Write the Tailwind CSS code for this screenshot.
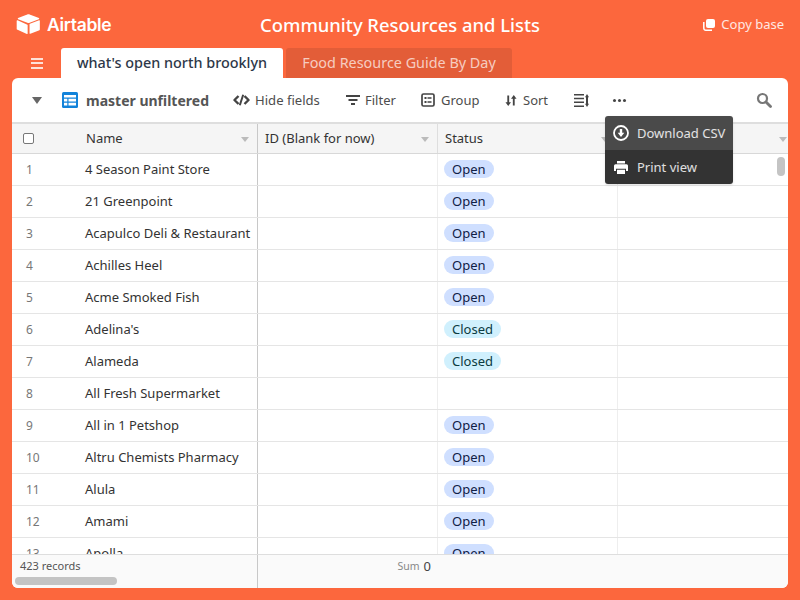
<!DOCTYPE html>
<html lang="en">
  <head>
    <meta charset="UTF-8" />
    <title>Community Resources and Lists</title>
    <script src="https://cdn.jsdelivr.net/npm/@tailwindcss/browser@4"></script>
  </head>
  <body class="w-[800px] h-[600px] overflow-hidden bg-[#fc673d] font-['Noto_Sans','Open_Sans',sans-serif] text-[13px] text-[#333333]">
    <!-- top bar -->
    <header class="h-[48px] relative flex items-center justify-between pl-[16px] pr-[16px] text-white">
      <div class="flex items-center gap-[6px]">
        <svg class="w-[25px] h-[20px]" viewBox="0 0 25 21" fill="#fff">
          <path d="M11.2.5 1.6 4.300c-.5.2-.5.9 0 1.100l9.700 3.800c.8.3 1.600.3 2.400 0l9.700-3.800c.5-.2.5-.9 0-1.100L13.700.5c-.8-.3-1.700-.3-2.500 0z" />
          <path d="M13.600 10.900v9.300c0 .4.4.7.8.5l9.600-3.700c.3-.1.4-.3.4-.6V7.100c0-.4-.4-.7-.8-.5l-9.600 3.700c-.3.1-.4.3-.4.6z" />
          <path d="M11.400 11.400 1 6.600c-.4-.2-.9.1-.9.5v8.600c0 .2.1.4.3.5l10.400 4.800c.4.2.8-.1.8-.5v-8.600c0-.2-.1-.4-.2-.5z" />
        </svg>
        <span class="font-['Inter',sans-serif] text-[17.500px] font-semibold tracking-[-0.3px] pt-[2px]">Airtable</span>
      </div>
      <h1 class="absolute left-0 right-0 text-center text-[18.4px] font-medium leading-[48px] pt-[2px]">Community Resources and Lists</h1>
      <div class="flex items-center gap-[6px] text-[13px] text-white/85 pt-[1px]">
        <svg class="w-[12px] h-[12px]" viewBox="0 0 12 12">
          <rect x="3" y="0" width="9" height="9" rx="2" fill="#fff" />
          <path d="M.8 3v6.200a2 2 0 0 0 2 2H9" fill="none" stroke="#fff" stroke-width="1.500" />
        </svg>
        <span>Copy base</span>
      </div>
    </header>

    <!-- tabs -->
    <nav class="h-[30px] flex items-end">
      <div class="w-[61px] h-full flex items-center justify-center pl-[13px]">
        <div class="w-[12px] flex flex-col gap-[2.500px]">
          <div class="h-[2px] bg-white/80"></div>
          <div class="h-[2px] bg-white/80"></div>
          <div class="h-[2px] bg-white/80"></div>
        </div>
      </div>
      <div class="h-full w-[222px] bg-white rounded-t-[3px] flex items-center justify-center pb-[1px] text-[14.400px] font-medium text-[#2d3748]">what's open north brooklyn</div>
      <div class="h-full w-[226px] ml-[3px] bg-[#e35d38] rounded-t-[3px] flex items-center justify-center pb-[1px] text-[14.400px] text-white/70">Food Resource Guide By Day</div>
    </nav>

    <!-- card -->
    <main class="relative mx-[12px] h-[510px] bg-white rounded-[6px] overflow-hidden flex flex-col">
      <!-- toolbar -->
      <div class="h-[44px] flex items-center shrink-0 text-[#4d4d4d]">
        <div class="ml-[20px] w-0 h-0 border-x-[5px] border-x-transparent border-t-[7px] border-t-[#666666]"></div>
        <svg class="ml-[20px] w-[16px] h-[16px]" viewBox="0 0 16 16">
          <rect width="16" height="16" rx="1.500" fill="#1283da" />
          <path d="M2 3h12v2.500H2zM2 6.800h3.300v2.700H2zM6.500 6.800H14v2.700H6.500zM2 10.800h3.300v2.700H2zM6.500 10.800H14v2.700H6.500z" fill="#fff" />
        </svg>
        <span class="ml-[8px] text-[14px] font-bold text-[#555555] w-[147px]">master unfiltered</span>
        <svg class="w-[17px] h-[12px]" viewBox="0 0 17 12" fill="none" stroke="#444444" stroke-width="2.400" stroke-linejoin="round">
          <path d="M5.500 2 1.500 6l4 4M11.500 2l4 4-4 4" />
          <path d="M10.200 .8 6.800 11.200" stroke-width="2" />
        </svg>
        <span class="ml-[5px] w-[91px] pt-[1px] text-[13.100px]">Hide fields</span>
        <svg class="w-[14px] h-[12px]" viewBox="0 0 14 12" fill="#444444"><path d="M0 1h14v2H0zM2.500 5h9v2h-9zM5 9h4v2H5z" /></svg>
        <span class="ml-[5px] w-[56px] pt-[1px]">Filter</span>
        <svg class="w-[14px] h-[14px]" viewBox="0 0 14 14" fill="none">
          <rect x="1" y="1" width="12" height="12" rx="1.500" stroke="#444444" stroke-width="1.700" />
          <path d="M3.500 4h2v2h-2zM3.500 8h2v2h-2zM6.500 4.300h4v1.400h-4zM6.500 8.300h4v1.400h-4z" fill="#444444" />
        </svg>
        <span class="ml-[6px] w-[64px] pt-[1px]">Group</span>
        <svg class="w-[12px] h-[13px]" viewBox="0 0 13 13" fill="#444444">
          <path d="M2.500 1h2v7.500H6.500L3.500 12.500.5 8.500h2zM8.500 12h2V4.500h2L9.500.5l-3 4h2z" />
        </svg>
        <span class="ml-[6px] w-[51px] pt-[1px]">Sort</span>
        <svg class="w-[15px] h-[13px]" viewBox="0 0 15 13" fill="#444444">
          <path d="M0 0h10v1.500H0zM0 3.800h10v1.500H0zM0 7.600h10v1.500H0zM0 11.500h10V13H0z" />
          <path d="M12 3h2v7h-2z" /><path d="M13 0l2 3.300h-4zM13 13l2-3.300h-4z" />
        </svg>
        <div class="ml-[24px] flex gap-[2px]">
          <div class="w-[3px] h-[3px] rounded-full bg-[#444444]"></div>
          <div class="w-[3px] h-[3px] rounded-full bg-[#444444]"></div>
          <div class="w-[3px] h-[3px] rounded-full bg-[#444444]"></div>
        </div>
        <svg class="ml-auto mr-[16px] w-[16px] h-[16px]" viewBox="0 0 16 16" fill="none" stroke="#777777">
          <circle cx="6.500" cy="6.500" r="4.500" stroke-width="2.200" />
          <path d="M10 10l4.500 4.500" stroke-width="2.800" stroke-linecap="round" />
        </svg>
      </div>

      <!-- column headers -->
      <div class="h-[32px] shrink-0 flex bg-[#f5f5f5] border-t-[2px] border-[#dedede] border-b border-b-[#d8d8d8]">
        <div class="w-[246px] flex items-center border-r border-[#c8c8c8] relative">
          <div class="ml-[11px] w-[11px] h-[11px] rounded-[2px] border border-[#777777] bg-white"></div>
          <span class="ml-[52px]">Name</span>
          <div class="absolute right-[8px] top-[13px] w-0 h-0 border-x-[4px] border-x-transparent border-t-[5px] border-t-[#bbbbbb]"></div>
        </div>
        <div class="w-[180px] flex items-center pl-[7px] border-r border-[#dedede] relative">
          ID (Blank for now)
          <div class="absolute right-[8px] top-[13px] w-0 h-0 border-x-[4px] border-x-transparent border-t-[5px] border-t-[#bbbbbb]"></div>
        </div>
        <div class="w-[180px] flex items-center pl-[7px] border-r border-[#dedede] relative">
          Status
          <div class="absolute right-[8px] top-[13px] w-0 h-0 border-x-[4px] border-x-transparent border-t-[5px] border-t-[#bbbbbb]"></div>
        </div>
        <div class="flex-1 relative">
          <div class="absolute right-[1px] top-[13px] w-0 h-0 border-x-[4px] border-x-transparent border-t-[5px] border-t-[#bbbbbb]"></div>
        </div>
      </div>

      <!-- rows -->
      <div class="flex-1 overflow-hidden text-[13px] text-[#333333]">
        <div class="flex h-[32px] border-b border-[#e5e5e5]"><div class="w-[246px] flex items-center border-r border-[#c8c8c8]"><span class="w-[73px] pl-[14px] text-[12px] text-[#777777]">1</span>4 Season Paint Store</div><div class="w-[180px] border-r border-[#eeeeee]"></div><div class="w-[180px] flex items-center pl-[6px] border-r border-[#eeeeee]"><span class="h-[18px] mb-[2px] leading-[18px] px-[8px] rounded-full bg-[#cfdfff] text-[#102046]">Open</span></div></div>
        <div class="flex h-[32px] border-b border-[#e5e5e5]"><div class="w-[246px] flex items-center border-r border-[#c8c8c8]"><span class="w-[73px] pl-[14px] text-[12px] text-[#777777]">2</span>21 Greenpoint</div><div class="w-[180px] border-r border-[#eeeeee]"></div><div class="w-[180px] flex items-center pl-[6px] border-r border-[#eeeeee]"><span class="h-[18px] mb-[2px] leading-[18px] px-[8px] rounded-full bg-[#cfdfff] text-[#102046]">Open</span></div></div>
        <div class="flex h-[32px] border-b border-[#e5e5e5]"><div class="w-[246px] flex items-center border-r border-[#c8c8c8]"><span class="w-[73px] pl-[14px] text-[12px] text-[#777777]">3</span>Acapulco Deli &amp; Restaurant</div><div class="w-[180px] border-r border-[#eeeeee]"></div><div class="w-[180px] flex items-center pl-[6px] border-r border-[#eeeeee]"><span class="h-[18px] mb-[2px] leading-[18px] px-[8px] rounded-full bg-[#cfdfff] text-[#102046]">Open</span></div></div>
        <div class="flex h-[32px] border-b border-[#e5e5e5]"><div class="w-[246px] flex items-center border-r border-[#c8c8c8]"><span class="w-[73px] pl-[14px] text-[12px] text-[#777777]">4</span>Achilles Heel</div><div class="w-[180px] border-r border-[#eeeeee]"></div><div class="w-[180px] flex items-center pl-[6px] border-r border-[#eeeeee]"><span class="h-[18px] mb-[2px] leading-[18px] px-[8px] rounded-full bg-[#cfdfff] text-[#102046]">Open</span></div></div>
        <div class="flex h-[32px] border-b border-[#e5e5e5]"><div class="w-[246px] flex items-center border-r border-[#c8c8c8]"><span class="w-[73px] pl-[14px] text-[12px] text-[#777777]">5</span>Acme Smoked Fish</div><div class="w-[180px] border-r border-[#eeeeee]"></div><div class="w-[180px] flex items-center pl-[6px] border-r border-[#eeeeee]"><span class="h-[18px] mb-[2px] leading-[18px] px-[8px] rounded-full bg-[#cfdfff] text-[#102046]">Open</span></div></div>
        <div class="flex h-[32px] border-b border-[#e5e5e5]"><div class="w-[246px] flex items-center border-r border-[#c8c8c8]"><span class="w-[73px] pl-[14px] text-[12px] text-[#777777]">6</span>Adelina's</div><div class="w-[180px] border-r border-[#eeeeee]"></div><div class="w-[180px] flex items-center pl-[6px] border-r border-[#eeeeee]"><span class="h-[18px] mb-[2px] leading-[18px] px-[8px] rounded-full bg-[#d0f0fd] text-[#0b3b42]">Closed</span></div></div>
        <div class="flex h-[32px] border-b border-[#e5e5e5]"><div class="w-[246px] flex items-center border-r border-[#c8c8c8]"><span class="w-[73px] pl-[14px] text-[12px] text-[#777777]">7</span>Alameda</div><div class="w-[180px] border-r border-[#eeeeee]"></div><div class="w-[180px] flex items-center pl-[6px] border-r border-[#eeeeee]"><span class="h-[18px] mb-[2px] leading-[18px] px-[8px] rounded-full bg-[#d0f0fd] text-[#0b3b42]">Closed</span></div></div>
        <div class="flex h-[32px] border-b border-[#e5e5e5]"><div class="w-[246px] flex items-center border-r border-[#c8c8c8]"><span class="w-[73px] pl-[14px] text-[12px] text-[#777777]">8</span>All Fresh Supermarket</div><div class="w-[180px] border-r border-[#eeeeee]"></div><div class="w-[180px] flex items-center pl-[6px] border-r border-[#eeeeee]"></div></div>
        <div class="flex h-[32px] border-b border-[#e5e5e5]"><div class="w-[246px] flex items-center border-r border-[#c8c8c8]"><span class="w-[73px] pl-[14px] text-[12px] text-[#777777]">9</span>All in 1 Petshop</div><div class="w-[180px] border-r border-[#eeeeee]"></div><div class="w-[180px] flex items-center pl-[6px] border-r border-[#eeeeee]"><span class="h-[18px] mb-[2px] leading-[18px] px-[8px] rounded-full bg-[#cfdfff] text-[#102046]">Open</span></div></div>
        <div class="flex h-[32px] border-b border-[#e5e5e5]"><div class="w-[246px] flex items-center border-r border-[#c8c8c8]"><span class="w-[73px] pl-[14px] text-[12px] text-[#777777]">10</span>Altru Chemists Pharmacy</div><div class="w-[180px] border-r border-[#eeeeee]"></div><div class="w-[180px] flex items-center pl-[6px] border-r border-[#eeeeee]"><span class="h-[18px] mb-[2px] leading-[18px] px-[8px] rounded-full bg-[#cfdfff] text-[#102046]">Open</span></div></div>
        <div class="flex h-[32px] border-b border-[#e5e5e5]"><div class="w-[246px] flex items-center border-r border-[#c8c8c8]"><span class="w-[73px] pl-[14px] text-[12px] text-[#777777]">11</span>Alula</div><div class="w-[180px] border-r border-[#eeeeee]"></div><div class="w-[180px] flex items-center pl-[6px] border-r border-[#eeeeee]"><span class="h-[18px] mb-[2px] leading-[18px] px-[8px] rounded-full bg-[#cfdfff] text-[#102046]">Open</span></div></div>
        <div class="flex h-[32px] border-b border-[#e5e5e5]"><div class="w-[246px] flex items-center border-r border-[#c8c8c8]"><span class="w-[73px] pl-[14px] text-[12px] text-[#777777]">12</span>Amami</div><div class="w-[180px] border-r border-[#eeeeee]"></div><div class="w-[180px] flex items-center pl-[6px] border-r border-[#eeeeee]"><span class="h-[18px] mb-[2px] leading-[18px] px-[8px] rounded-full bg-[#cfdfff] text-[#102046]">Open</span></div></div>
        <div class="flex h-[32px] border-b border-[#e5e5e5]"><div class="w-[246px] flex items-center border-r border-[#c8c8c8]"><span class="w-[73px] pl-[14px] text-[12px] text-[#777777]">13</span>Apolla</div><div class="w-[180px] border-r border-[#eeeeee]"></div><div class="w-[180px] flex items-center pl-[6px] border-r border-[#eeeeee]"><span class="h-[18px] mb-[2px] leading-[18px] px-[8px] rounded-full bg-[#cfdfff] text-[#102046]">Open</span></div></div>
      </div>

      <!-- footer -->
      <div class="h-[34px] shrink-0 flex bg-[#fafafa] border-t border-[#dedede] relative">
        <div class="w-[246px] border-r border-[#c8c8c8] pl-[8px] pt-[3px] text-[11px] text-[#555555]">423 records</div>
        <div class="w-[180px] flex justify-end items-start pt-[2px] pr-[7px] gap-[4px]">
          <span class="text-[10.500px] text-[#888888] pt-[2px]">Sum</span>
          <span class="text-[13px] text-[#444444]">0</span>
        </div>
      </div>

      <!-- scrollbars -->
      <div class="absolute left-[3px] bottom-[3px] w-[102px] h-[8px] rounded-full bg-[#c4c4c4]"></div>
      <div class="absolute right-[3px] top-[79px] w-[8px] h-[19px] rounded-full bg-[#c4c4c4]"></div>

      <!-- more menu -->
      <div class="absolute left-[593px] top-[38px] w-[128px] rounded-[3px] overflow-hidden text-[13px] text-white/85 shadow-sm">
        <div class="h-[34px] bg-[#4a4a4a] flex items-center pl-[8px] gap-[8px] pt-[1px]">
          <svg class="w-[16px] h-[16px] -mt-[1px]" viewBox="0 0 16 16" fill="none">
            <circle cx="8" cy="8" r="7" stroke="#fff" stroke-width="1.800" />
            <path d="M6.800 4h2.400v3.800h2.100L8 12 4.700 7.800h2.100z" fill="#fff" />
          </svg>
          <span>Download CSV</span>
        </div>
        <div class="h-[34px] bg-[#333333] flex items-center pl-[9px] gap-[9px] pt-[1px]">
          <svg class="w-[14px] h-[13px] -mt-[1px]" viewBox="0 0 14 13" fill="#fff">
            <path d="M3 0h8v2.500H3z" />
            <path d="M1.500 3.300h11A1.500 1.500 0 0 1 14 4.800V10h-2V7.800H2V10H0V4.800a1.500 1.500 0 0 1 1.500-1.500z" />
            <path d="M3 8.800h8V13H3z" />
          </svg>
          <span>Print view</span>
        </div>
      </div>
    </main>
  </body>
</html>
